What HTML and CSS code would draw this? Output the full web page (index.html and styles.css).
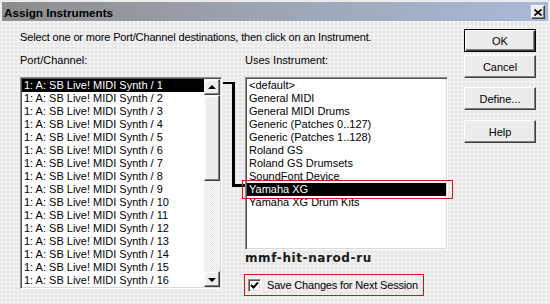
FILE: index.html
```html
<!DOCTYPE html>
<html>
<head>
<meta charset="utf-8">
<link rel="stylesheet" href="styles.css">
</head>
<body>
<div class="window">
  <div class="titlebar">
    <span class="title">Assign Instruments</span>
    <span class="close"><svg width="8" height="7" viewBox="0 0 8 7"><path d="M0.5 0.5 L7.5 6.5 M7.5 0.5 L0.5 6.5" stroke="#000" stroke-width="1.6"/></svg></span>
  </div>
  <div class="body">
    <div class="left">
      <p class="instr">Select one or more Port/Channel destinations, then click on an Instrument.</p>
      <div class="labels"><span class="lab-port">Port/Channel:</span><span>Uses Instrument:</span></div>
      <div class="lists">
        <div class="plist">
          <ul class="items">
            <li class="sel">1: A: SB Live! MIDI Synth / 1</li>
            <li>1: A: SB Live! MIDI Synth / 2</li>
            <li>1: A: SB Live! MIDI Synth / 3</li>
            <li>1: A: SB Live! MIDI Synth / 4</li>
            <li>1: A: SB Live! MIDI Synth / 5</li>
            <li>1: A: SB Live! MIDI Synth / 6</li>
            <li>1: A: SB Live! MIDI Synth / 7</li>
            <li>1: A: SB Live! MIDI Synth / 8</li>
            <li>1: A: SB Live! MIDI Synth / 9</li>
            <li>1: A: SB Live! MIDI Synth / 10</li>
            <li>1: A: SB Live! MIDI Synth / 11</li>
            <li>1: A: SB Live! MIDI Synth / 12</li>
            <li>1: A: SB Live! MIDI Synth / 13</li>
            <li>1: A: SB Live! MIDI Synth / 14</li>
            <li>1: A: SB Live! MIDI Synth / 15</li>
            <li>1: A: SB Live! MIDI Synth / 16</li>
          </ul>
          <div class="scrollbar">
            <div class="sb-btn"><span class="tri-up"></span></div>
            <div class="sb-thumb"></div>
            <div class="sb-track"></div>
            <div class="sb-btn"><span class="tri-down"></span></div>
          </div>
        </div>
        <div class="conn conn-top"></div>
        <div class="conn conn-vert"></div>
        <div class="conn conn-bot"></div>
        <div class="rcol">
          <div class="rwrap">
            <ul class="items rlist">
              <li>&lt;default&gt;</li>
              <li>General MIDI</li>
              <li>General MIDI Drums</li>
              <li>Generic (Patches 0..127)</li>
              <li>Generic (Patches 1..128)</li>
              <li>Roland GS</li>
              <li>Roland GS Drumsets</li>
              <li>SoundFont Device</li>
              <li class="sel">Yamaha XG</li>
              <li>Yamaha XG Drum Kits</li>
            </ul>
            <div class="redbox redbox-xg"></div>
          </div>
          <div class="watermark">mmf-hit-narod-ru</div>
          <div class="save">
            <span class="cb"><svg width="9" height="9" viewBox="0 0 9 9"><path d="M1 4 L3.5 6.5 L8 1.5" fill="none" stroke="#000" stroke-width="2"/></svg></span>
            <span class="save-text">Save Changes for Next Session</span>
          </div>
        </div>
      </div>
    </div>
    <div class="buttons">
      <div class="btn btn-default btn-ok">OK</div>
      <div class="btn btn-cancel">Cancel</div>
      <div class="btn btn-define">Define...</div>
      <div class="btn btn-help">Help</div>
    </div>
  </div>
</div>
</body>
</html>
```

FILE: styles.css
```css
* { box-sizing: border-box; }
html, body { margin: 0; padding: 0; }
body {
  width: 550px;
  height: 304px;
  overflow: hidden;
  font-family: "Liberation Sans", Arial, sans-serif;
  font-size: 11px;
  color: #000;
  background-color: #e9e9e9;
  background-image: radial-gradient(circle, #f7f7f7 0.7px, transparent 1.1px);
  background-size: 4px 4px;
}
.window { width: 550px; height: 304px; }
.titlebar {
  margin: 2px 2px 0 2px;
  height: 19px;
  display: flex;
  align-items: flex-start;
  background: linear-gradient(90deg, #8c8c8c 0%, #9ca3b0 45%, #a9b9d9 100%);
}
.title {
  font-weight: bold;
  font-size: 11.7px;
  line-height: 17px;
  padding-top: 2px;
  padding-left: 2px;
}
.close {
  margin-left: auto;
  margin-top: 3px;
  margin-right: 3px;
  width: 14px;
  height: 14px;
  background: #ececec;
  border: 1px solid;
  border-color: #fff #404040 #404040 #fff;
  box-shadow: inset -1px -1px #808080;
  display: flex;
  align-items: center;
  justify-content: center;
}
.body {
  display: flex;
  padding-left: 20px;
}
.left { width: 433px; }
.instr {
  margin: 10px 0 0 0;
  line-height: 13px;
  white-space: nowrap;
  letter-spacing: -0.15px;
}
.labels {
  margin-top: 10px;
  display: flex;
  line-height: 13px;
}
.lab-port { width: 225px; }
.lists {
  margin-top: 10px;
  display: flex;
  position: relative;
}
.plist {
  width: 202px;
  height: 212px;
  display: flex;
  background: #fff;
  border: 1px solid;
  border-color: #909090 #fff #fff #909090;
  box-shadow: inset 1px 1px #505050, inset -1px -1px #d8d8d8;
  padding: 1px;
}
.items {
  list-style: none;
  margin: 0;
  padding: 0;
  flex: 1;
}
.items li {
  height: 13px;
  line-height: 13px;
  padding-left: 2px;
  white-space: nowrap;
}
.items li.sel { background: #000; color: #fff; }
.scrollbar {
  width: 16px;
  display: flex;
  flex-direction: column;
}
.sb-btn, .sb-thumb {
  background: #ececec;
  border: 1px solid;
  border-color: #f4f4f4 #404040 #404040 #f4f4f4;
  box-shadow: inset -1px -1px #808080, inset 1px 1px #fff;
}
.sb-btn {
  height: 16px;
  display: flex;
  align-items: center;
  justify-content: center;
}
.sb-thumb { height: 86px; }
.sb-track {
  flex: 1;
  background-color: #fff;
  background-image: conic-gradient(#e2e2e2 25%, #fff 0 50%, #e2e2e2 0 75%, #fff 0);
  background-size: 2px 2px;
}
.tri-up, .tri-down {
  width: 0; height: 0;
  border-left: 4px solid transparent;
  border-right: 4px solid transparent;
}
.tri-up { border-bottom: 4px solid #000; margin-top: -1px; }
.tri-down { border-top: 4px solid #000; margin-top: 1px; }
.conn { position: absolute; background: #000; }
.conn-top { left: 203px; top: 5px; width: 12px; height: 2px; }
.conn-vert { left: 212px; top: 5px; width: 3px; height: 105px; }
.conn-bot { left: 212px; top: 107px; width: 13px; height: 3px; }
.rcol {
  margin-left: 23px;
  width: 208px;
}
.rwrap { position: relative; width: 203px; }
.rlist {
  height: 173px;
  background: #fff;
  border: 1px solid;
  border-color: #909090 #fff #fff #909090;
  box-shadow: inset 1px 1px #505050, inset -1px -1px #d8d8d8;
  padding: 1px;
}
.redbox {
  position: absolute;
  border: 1px solid #e01010;
}
.redbox-xg { left: -3px; top: 103px; width: 211px; height: 19px; }
.watermark {
  margin-top: 1px;
  font-family: "DejaVu Sans", Verdana, sans-serif;
  font-weight: bold;
  font-size: 12px;
  line-height: 14px;
  letter-spacing: 0.6px;
  color: #1a1a1a;
}
.save {
  margin-top: 9px;
  margin-left: -1px;
  width: 180px;
  height: 22px;
  border: 1px solid #e01010;
  display: flex;
  align-items: center;
  padding-left: 3px;
}
.save-text { letter-spacing: -0.17px; }
.cb {
  width: 13px;
  height: 13px;
  background: #fff;
  border: 1px solid;
  border-color: #909090 #fff #fff #909090;
  box-shadow: inset 1px 1px #505050, inset -1px -1px #d8d8d8;
  display: flex;
  align-items: center;
  justify-content: center;
  margin-right: 6px;
}
.buttons {
  margin-left: 11px;
  padding-top: 8px;
  width: 72px;
}
.btn {
  height: 23px;
  display: flex;
  align-items: center;
  justify-content: center;
  background: #ececec;
  border: 1px solid;
  border-color: #fff #404040 #404040 #fff;
  box-shadow: inset -1px -1px #808080;
}
.btn-default {
  border: 1px solid #000;
  box-shadow: inset 1px 1px #fff, inset -1px -1px #404040, inset -2px -2px #808080;
}
.btn-cancel { margin-top: 3px; }
.btn-define { margin-top: 9px; }
.btn-help { margin-top: 10px; }
```
